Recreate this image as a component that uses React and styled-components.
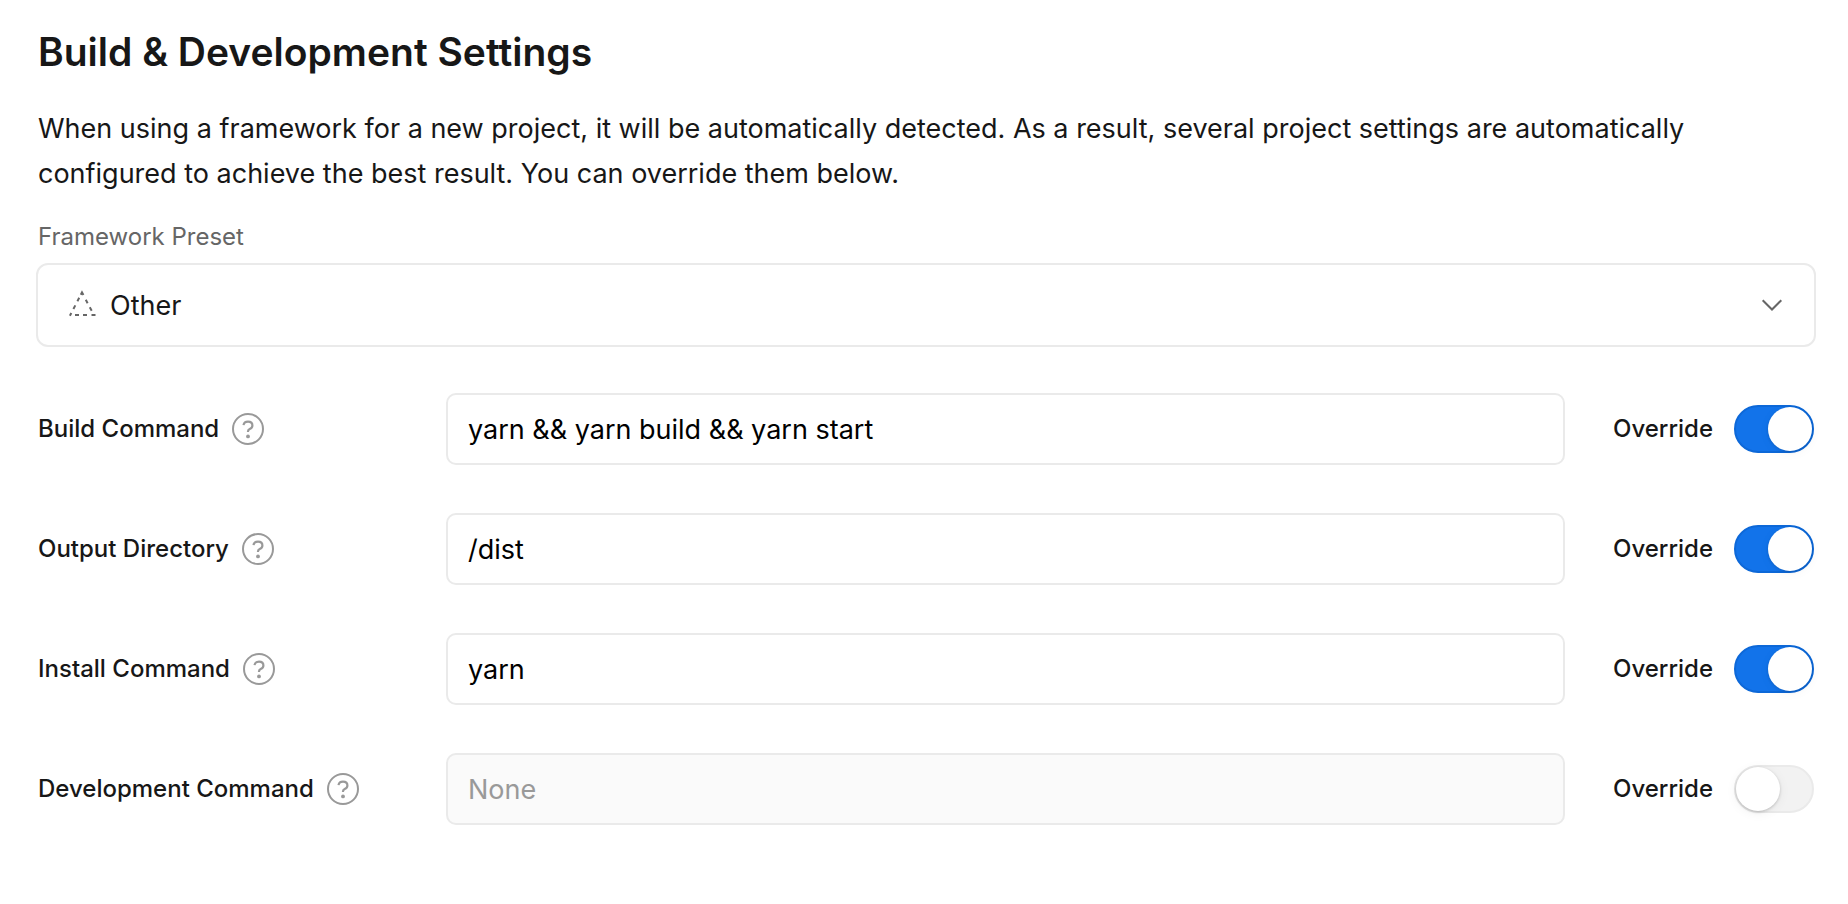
import React, { useId, useState } from "react";
import styled, { createGlobalStyle } from "styled-components";

const GlobalStyle = createGlobalStyle`
  *, *::before, *::after { box-sizing: border-box; }
  body {
    margin: 0;
    background: #fff;
    color: #171717;
    font-family: Inter, "Liberation Sans", sans-serif;
    -webkit-font-smoothing: antialiased;
  }
`;

const Page = styled.main`
  padding: 28px 32px 80px 36px;
`;

const Intro = styled.header`
  padding: 0 2px;
`;

const Title = styled.h1`
  margin: 0;
  font-size: 39px;
  line-height: 48px;
  font-weight: 600;
`;

const Description = styled.p`
  margin: 30px 0 0;
  font-size: 27px;
  line-height: 45px;
`;

const PresetLabel = styled.label`
  display: block;
  margin: 25px 2px 10px;
  font-size: 24px;
  line-height: 32px;
  color: #666;
`;

const SelectBox = styled.div`
  display: grid;
  align-items: center;

  & > * { grid-area: 1 / 1; }
`;

const Select = styled.select`
  width: 100%;
  height: 84px;
  padding: 0 80px 0 72px;
  appearance: none;
  border: 2px solid #eaeaea;
  border-radius: 12px;
  background: #fff;
  color: #171717;
  font: inherit;
  font-size: 27px;
`;

const SelectIcon = styled.svg`
  width: 32px;
  height: 32px;
  justify-self: ${({ $side }) => $side};
  margin: 0 ${({ $side }) => ($side === "end" ? "28px" : "30px")};
  fill: none;
  stroke: #666;
  stroke-width: 2;
  pointer-events: none;
`;

const Rows = styled.div`
  display: grid;
  gap: 48px;
  margin-top: 46px;
  padding: 0 2px;
`;

const Row = styled.div`
  display: grid;
  grid-template-columns: 408px minmax(0, 1fr) auto;
  align-items: center;
`;

const LabelCell = styled.div`
  display: flex;
  align-items: center;
  gap: 13px;
`;

const FieldLabel = styled.label`
  font-size: 24px;
  line-height: 32px;
  font-weight: 500;
  white-space: nowrap;
`;

const HelpButton = styled.button`
  display: flex;
  padding: 0;
  border: 0;
  background: none;
  color: #999;
  cursor: pointer;
`;

const TextInput = styled.input`
  width: 100%;
  height: 72px;
  padding: 0 20px;
  border: 2px solid #eaeaea;
  border-radius: 10px;
  background: #fff;
  color: #000;
  font: inherit;
  font-size: 27px;

  &:disabled { background: #fafafa; }
  &::placeholder { color: #999; opacity: 1; }
`;

const OverrideLabel = styled.label`
  display: flex;
  align-items: center;
  justify-content: space-between;
  width: 201px;
  margin-left: 48px;
  font-size: 24px;
  line-height: 32px;
  font-weight: 500;
  cursor: pointer;
`;

const Toggle = styled.input`
  appearance: none;
  display: flex;
  width: 80px;
  height: 48px;
  margin: 0;
  border: 2px solid #eaeaea;
  border-radius: 24px;
  background: #f2f2f2;
  cursor: pointer;

  &::before {
    content: "";
    width: 44px;
    height: 44px;
    border-radius: 50%;
    background: #fff;
    box-shadow: 0 1px 3px rgba(0, 0, 0, 0.2), 0 2px 12px rgba(0, 0, 0, 0.06);
  }

  &:checked {
    justify-content: flex-end;
    border-color: #0d68d8;
    background: #1273ea;
  }

  &:checked::before {
    box-shadow: 0 1px 3px rgba(0, 0, 0, 0.14), 0 2px 12px rgba(0, 0, 0, 0.04);
  }
`;

function HelpIcon() {
  return (
    <svg width="32" height="32" viewBox="0 0 32 32" fill="none" aria-hidden="true">
      <circle cx="16" cy="16" r="15" stroke="currentColor" strokeWidth="2" />
      <path
        d="M11.5 12.1C11.9 9.9 13.6 8.7 16 8.7C18.6 8.7 20.4 10.2 20.4 12.5C20.4 14.3 19.3 15.3 17.7 16C16.5 16.6 15.9 17.3 15.9 19"
        stroke="currentColor"
        strokeWidth="2.2"
      />
      <circle cx="16" cy="23.4" r="1.9" fill="currentColor" />
    </svg>
  );
}

function CommandRow({ label, initial, overridden }) {
  const id = useId();
  const [value, setValue] = useState(initial);
  const [enabled, setEnabled] = useState(overridden);
  return (
    <Row>
      <LabelCell>
        <FieldLabel htmlFor={id}>{label}</FieldLabel>
        <HelpButton type="button" aria-label={`About ${label}`}>
          <HelpIcon />
        </HelpButton>
      </LabelCell>
      <TextInput
        id={id}
        type="text"
        value={value}
        placeholder="None"
        disabled={!enabled}
        onChange={(e) => setValue(e.target.value)}
      />
      <OverrideLabel>
        Override
        <Toggle
          type="checkbox"
          role="switch"
          checked={enabled}
          onChange={(e) => setEnabled(e.target.checked)}
        />
      </OverrideLabel>
    </Row>
  );
}

const commands = [
  { label: "Build Command", initial: "yarn && yarn build && yarn start", overridden: true },
  { label: "Output Directory", initial: "/dist", overridden: true },
  { label: "Install Command", initial: "yarn", overridden: true },
  { label: "Development Command", initial: "", overridden: false },
];

export default function App() {
  return (
    <>
      <GlobalStyle />
      <Page>
        <Intro>
          <Title>Build &amp; Development Settings</Title>
          <Description>
            When using a framework for a new project, it will be automatically detected. As a
            result, several project settings are automatically configured to achieve the best
            result. You can override them below.
          </Description>
        </Intro>
        <PresetLabel htmlFor="preset">Framework Preset</PresetLabel>
        <SelectBox>
          <Select id="preset" defaultValue="other">
            <option value="other">Other</option>
          </Select>
          <SelectIcon $side="start" viewBox="0 0 32 32" aria-hidden="true">
            <path d="M9 26H13M17 26H21M25.5 26H29.5" />
            <path d="M3.9 26.8L5.3 24M7.4 20L9.3 16.4M11.4 12.2L13.2 8.8M14.8 5.8L16 3.4L17.4 6M19.8 10.8L21.6 14.2M23.8 18.3L25.7 21.8" />
          </SelectIcon>
          <SelectIcon $side="end" viewBox="0 0 32 32" aria-hidden="true">
            <path d="M6.7 11.2L16 20.5L25.3 11.2" />
          </SelectIcon>
        </SelectBox>
        <Rows>
          {commands.map((command) => (
            <CommandRow key={command.label} {...command} />
          ))}
        </Rows>
      </Page>
    </>
  );
}
